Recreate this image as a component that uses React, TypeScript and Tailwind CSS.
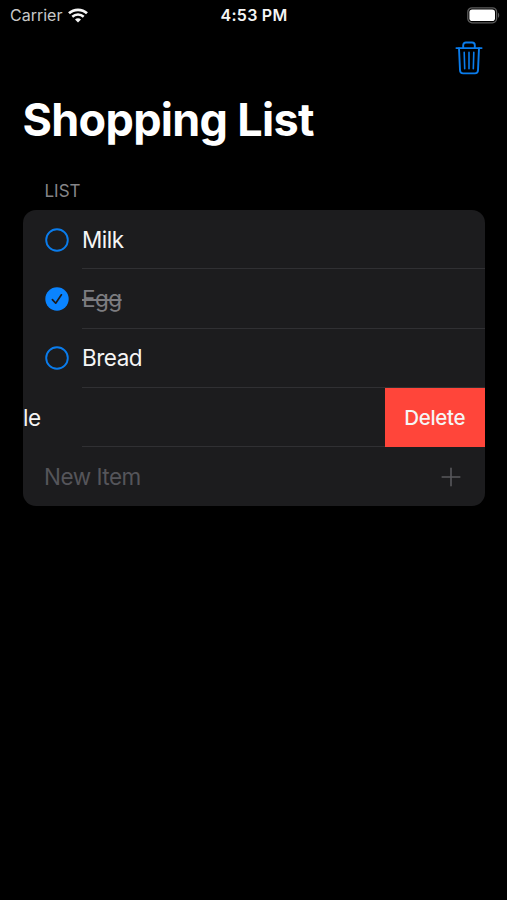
import { useState } from "react";

type Item = { name: string; done: boolean };

const initialItems: Item[] = [
  { name: "Milk", done: false },
  { name: "Egg", done: true },
  { name: "Bread", done: false },
];

const WifiIcon = () => (
  <svg width="20" height="15" viewBox="0 0 20 15" fill="none">
    <path d="M1 5.3C6 .6 14 .6 19 5.3" stroke="#f5f5f5" strokeWidth="2.7" />
    <path d="M4.3 8.7C7.5 5.8 12.5 5.8 15.7 8.7" stroke="#f5f5f5" strokeWidth="2.5" />
    <path d="M7 11.5C8.7 9.9 11.3 9.9 13 11.5L10 14.5Z" fill="#f5f5f5" />
  </svg>
);

const BatteryIcon = () => (
  <svg width="34" height="17" viewBox="0 0 34 17" fill="none">
    <rect x="0.8" y="0.8" width="28.8" height="15" rx="4.2" stroke="#5c5c5c" strokeWidth="1.3" />
    <rect x="2.4" y="2.6" width="25.6" height="11.4" rx="2.8" fill="#fff" />
    <path d="M31 5.8C32.6 6.4 32.6 10.2 31 10.8Z" fill="#5c5c5c" />
  </svg>
);

const TrashIcon = () => (
  <svg
    width="28"
    height="34"
    viewBox="0 0 28 34"
    fill="none"
    stroke="#0a7cec"
    strokeWidth="1.9"
    strokeLinecap="round"
    strokeLinejoin="round"
  >
    <path d="M1.4 7.1H26.6" />
    <path d="M8.2 7V4.2C8.2 2.6 9.3 1.5 10.9 1.5H17.1C18.7 1.5 19.8 2.6 19.8 4.2V7" />
    <path d="M4 7.3L5 29.3C5.1 31.3 6.2 32.4 8.1 32.4H19.9C21.8 32.4 22.9 31.3 23 29.3L24 7.3" />
    <path d="M9.2 11.4L9.7 27.8M14 11.4V27.8M18.8 11.4L18.3 27.8" strokeWidth="1.6" />
  </svg>
);

const CheckCircle = ({ done }: { done: boolean }) => (
  <svg width="24" height="24" viewBox="0 0 24 24" fill="none">
    {done ? (
      <>
        <circle cx="12" cy="12" r="11.7" fill="#0a84ff" />
        <path
          d="M7.4 12.6L10.7 16.2L16.4 7.8"
          stroke="#1c1c1e"
          strokeWidth="1.7"
          strokeLinecap="round"
          strokeLinejoin="round"
        />
      </>
    ) : (
      <circle cx="12" cy="12" r="10.8" stroke="#0a7cec" strokeWidth="1.9" />
    )}
  </svg>
);

const App = () => {
  const [items, setItems] = useState(initialItems);

  const toggleItem = (index: number) => {
    setItems(items.map((item, i) => (i === index ? { ...item, done: !item.done } : item)));
  };

  return (
    <div className="h-[900px] w-[507px] overflow-hidden bg-black text-[#f5f5f5] font-['Inter','Liberation_Sans',sans-serif]">
      {/* Status bar */}
      <header className="grid h-[30px] grid-cols-3 items-center pl-[10px] pr-[6px]">
        <div className="flex items-center gap-[6px] text-[#c8c8c8]">
          <span className="text-[16px]">Carrier</span>
          <WifiIcon />
        </div>
        <span className="pr-[3px] text-center text-[16px] font-semibold tracking-[0.25px]">4:53 PM</span>
        <div className="flex justify-end">
          <BatteryIcon />
        </div>
      </header>

      {/* Toolbar */}
      <div className="flex h-[57px] justify-end pr-6 pt-[11px]">
        <button aria-label="Delete all" className="h-[34px]">
          <TrashIcon />
        </button>
      </div>

      <h1 className="h-[66px] pl-[22.5px] text-[45px] leading-[66px] font-bold tracking-[-0.7px] text-white">
        Shopping List
      </h1>

      <main className="px-[22.5px] pt-[27px]">
        <h2 className="h-[30px] pl-[22px] text-[17px] leading-[22px] text-[#858588]">LIST</h2>

        <ul className="overflow-hidden rounded-[13px] bg-[#1c1c1e] text-[22.5px] tracking-[-0.5px]">
          {items.map((item, i) => (
            <li key={item.name} className="flex h-[59.25px] pl-[22.5px]">
              <button aria-label={item.name} onClick={() => toggleItem(i)} className="mr-[13px]">
                <CheckCircle done={item.done} />
              </button>
              <span
                className={`flex flex-1 items-center border-b border-[#303033] pt-px ${
                  item.done ? "text-[#7c7c80] line-through" : ""
                }`}
              >
                {item.name}
              </span>
            </li>
          ))}

          {/* Row swiped open */}
          <li className="flex h-[59.25px]">
            <span className="flex w-[59.5px] items-center pl-[0.5px]">le</span>
            <span className="flex-1 border-b border-[#303033]" />
            <button className="w-[99.5px] bg-[#ff453a] pt-[2px] text-[20.5px] font-medium tracking-[-0.3px]">
              Delete
            </button>
          </li>

          <li className="flex h-[59.25px] items-center justify-between pl-[21.5px] pr-[24px] text-[#55555a]">
            <span>New Item</span>
            <svg width="20" height="20" viewBox="0 0 20 20" stroke="#58585c" strokeWidth="1.6" strokeLinecap="round">
              <path d="M10 1.2V18.8M1.2 10H18.8" />
            </svg>
          </li>
        </ul>
      </main>
    </div>
  );
};

export default App;
